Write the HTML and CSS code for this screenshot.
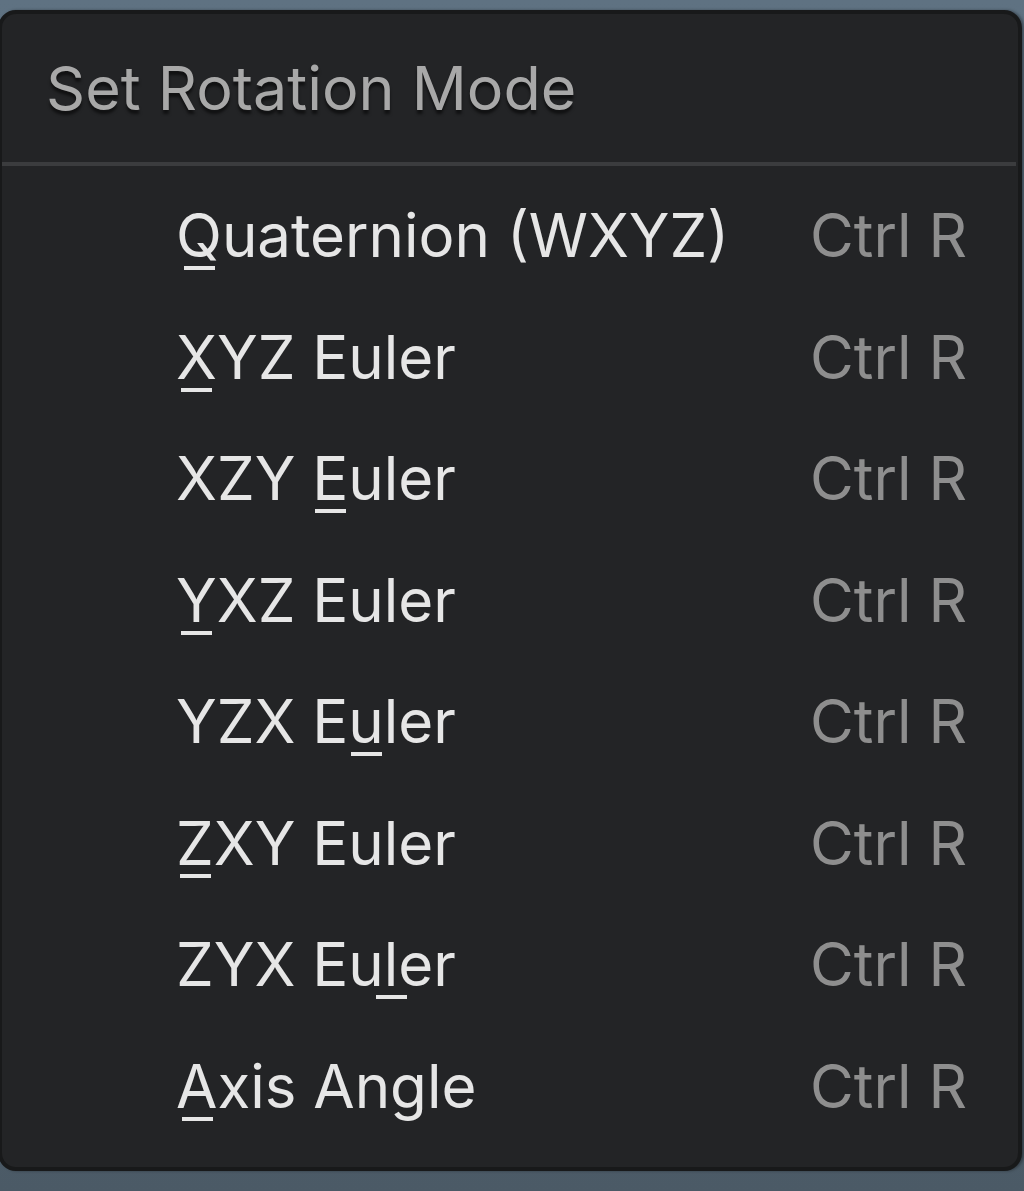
FILE: index.html
```html
<!DOCTYPE html>
<html lang="en">
<head>
<meta charset="utf-8">
<title>Set Rotation Mode</title>
<link rel="stylesheet" href="styles.css">
</head>
<body>
<div class="menu">
  <div class="menu-title">Set Rotation Mode</div>
  <div class="menu-sep"></div>
  <ul class="menu-items">
    <li class="item"><span class="label"><u>Q</u>uaternion (WXYZ)</span><span class="key">Ctrl R</span></li>
    <li class="item"><span class="label"><u>X</u>YZ Euler</span><span class="key">Ctrl R</span></li>
    <li class="item"><span class="label">XZY <u>E</u>uler</span><span class="key">Ctrl R</span></li>
    <li class="item"><span class="label"><u>Y</u>XZ Euler</span><span class="key">Ctrl R</span></li>
    <li class="item"><span class="label">YZX E<u>u</u>ler</span><span class="key">Ctrl R</span></li>
    <li class="item"><span class="label"><u>Z</u>XY Euler</span><span class="key">Ctrl R</span></li>
    <li class="item"><span class="label">ZYX Eu<u>l</u>er</span><span class="key">Ctrl R</span></li>
    <li class="item"><span class="label"><u>A</u>xis Angle</span><span class="key">Ctrl R</span></li>
  </ul>
</div>
</body>
</html>
```
FILE: styles.css
```css
html, body {
  margin: 0;
  padding: 0;
}
body {
  width: 1024px;
  height: 1191px;
  overflow: hidden;
  background: linear-gradient(180deg, #5f7282 0%, #56687a 50%, #4b5a66 100%);
  font-family: Inter, "Noto Sans", "Liberation Sans", sans-serif;
  padding-top: 10px;
  box-sizing: border-box;
}
.menu {
  box-sizing: border-box;
  width: 1024px;
  margin-left: -2px;
  height: 1161px;
  background: #232426;
  border: 4px solid #18191a;
  border-radius: 18px;
  box-shadow: 2px 0 3px rgba(0, 0, 0, 0.35);
}
.menu-title {
  height: 148px;
  line-height: 148px;
  font-size: 61px;
  padding-left: 44px;
  color: #a8a8a8;
  text-shadow: 0 4px 3px rgba(0, 0, 0, 0.55);
  white-space: nowrap;
}
.menu-sep {
  height: 4px;
  margin-right: 2px;
  background: #3b3c3e;
}
.menu-items {
  list-style: none;
  margin: 0;
  padding: 9px 0 0 0;
}
.item {
  display: flex;
  height: 121.5px;
  line-height: 121.5px;
  font-size: 60px;
  white-space: nowrap;
}
.label {
  flex: 0 0 634px;
  padding-left: 174px;
  color: #e6e6e6;
}
.label u {
  position: relative;
  text-decoration: none;
}
.label u::after {
  content: "";
  position: absolute;
  left: 50%;
  width: 31px;
  margin-left: -15px;
  bottom: 1px;
  height: 4px;
  background: #e6e6e6;
}
.key {
  color: #8e8e8e;
}
```
